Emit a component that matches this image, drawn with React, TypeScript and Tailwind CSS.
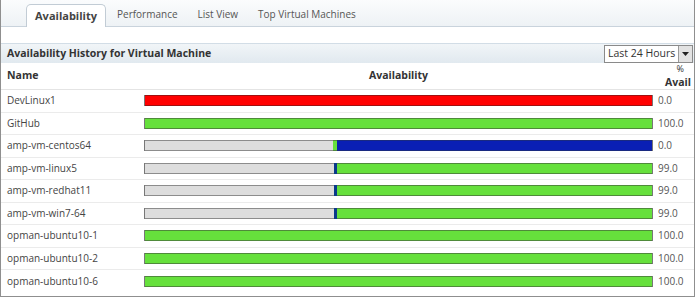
const ROWS = [
  { name: "DevLinux1", segs: [{ c: "red", w: 100 }], pct: "0.0" },
  { name: "GitHub", segs: [{ c: "green", w: 100 }], pct: "100.0" },
  { name: "amp-vm-centos64", segs: [{ c: "gray", w: 37 }, { c: "green", w: 0.8 }, { c: "blue", w: 62.2 }], pct: "0.0" },
  { name: "amp-vm-linux5", segs: [{ c: "gray", w: 37.3 }, { c: "tick", w: 0.5 }, { c: "green", w: 62.2 }], pct: "99.0" },
  { name: "amp-vm-redhat11", segs: [{ c: "gray", w: 37.3 }, { c: "tick", w: 0.5 }, { c: "green", w: 62.2 }], pct: "99.0" },
  { name: "amp-vm-win7-64", segs: [{ c: "gray", w: 37.3 }, { c: "tick", w: 0.5 }, { c: "green", w: 62.2 }], pct: "99.0" },
  { name: "opman-ubuntu10-1", segs: [{ c: "green", w: 100 }], pct: "100.0" },
  { name: "opman-ubuntu10-2", segs: [{ c: "green", w: 100 }], pct: "100.0" },
  { name: "opman-ubuntu10-6", segs: [{ c: "green", w: 100 }], pct: "100.0" },
];

const SEG: Record<string, string> = {
  red: "bg-[#ff0000] border-y border-[#a01010]",
  green: "bg-[#66e03c] border-y border-[#4f8a3a]",
  blue: "bg-[#0a1fb4] border-y border-[#1a2a80]",
  gray: "bg-[#dddddd] border-y border-[#8c8c8c]",
  tick: "bg-[#0a3a8a] border-y border-[#0a3a8a]",
};

function Bar({ segs }: { segs: { c: string; w: number }[] }) {
  return (
    <div className="flex h-[11px] w-[509px] border-x border-[#777]">
      {segs.map((s, i) => (
        <div key={i} className={SEG[s.c]} style={{ width: `${s.w}%` }} />
      ))}
    </div>
  );
}

export default function App() {
  return (
    <div
      className="w-[695px] h-[297px] bg-white text-[10px] text-[#333] overflow-hidden"
      style={{ fontFamily: '"Open Sans", "Liberation Sans", sans-serif' }}
    >
      <div className="flex h-full flex-col border-x border-b border-[#8f8f8f]">
        {/* tabs */}
        <div className="flex h-[27px] items-end border-b border-[#c9d3dc] bg-gradient-to-b from-[#fbfcfd] to-[#eef2f5] pl-[25px]">
          <div className="-mb-px flex h-[23px] w-[80px] items-center justify-center rounded-t-[5px] border border-b-0 border-[#c2ccd5] bg-white text-[11px] font-bold text-[#444]">
            Availability
          </div>
          <div className="flex h-[23px] items-center gap-[20px] pl-[11px] text-[10px] text-[#555]">
            <span>Performance</span>
            <span>List View</span>
            <span>Top Virtual Machines</span>
          </div>
        </div>
        <div className="h-[16px]" />
        {/* section header */}
        <div className="flex h-[20px] items-center justify-between border-t border-[#d2dde6] bg-gradient-to-b from-[#f1f5f8] to-[#e1e9ef] pl-[6px] pr-[1px]">
          <span className="text-[10.5px] font-bold text-[#333]">Availability History for Virtual Machine</span>
          <div className="flex h-[18px] w-[89px] items-center border border-[#8a8a8a] bg-white">
            <span className="flex-1 whitespace-nowrap pl-[3px] text-[10.5px] text-[#333]">Last 24 Hours</span>
            <span className="flex h-full w-[14px] items-center justify-center border-l border-[#9a9a9a] bg-[#e2e2e2]">
              <svg width="7" height="4" viewBox="0 0 7 4">
                <path d="M0 0h7L3.5 4z" fill="#222" />
              </svg>
            </span>
          </div>
        </div>
        {/* column header */}
        <div className="flex h-[27px] items-center border-b border-[#e4e4e4] text-[10.5px] font-bold">
          <span className="w-[143px] pl-[6px]">Name</span>
          <span className="w-[509px] text-center">Availability</span>
          <span className="flex flex-1 flex-col items-end pr-[3px]">
            <span className="pr-[7px] text-[9px] leading-[12px] font-normal">%</span>
            <span className="leading-[14px]">Avail</span>
          </span>
        </div>
        {/* rows */}
        {ROWS.map((r) => (
          <div key={r.name} className="flex h-[22.5px] items-center border-b border-[#ebebeb] text-[#444] last:border-b-0">
            <span className="w-[143px] pl-[6px]">{r.name}</span>
            <Bar segs={r.segs} />
            <span className="pl-[5px] text-[#555]">{r.pct}</span>
          </div>
        ))}
      </div>
    </div>
  );
}
